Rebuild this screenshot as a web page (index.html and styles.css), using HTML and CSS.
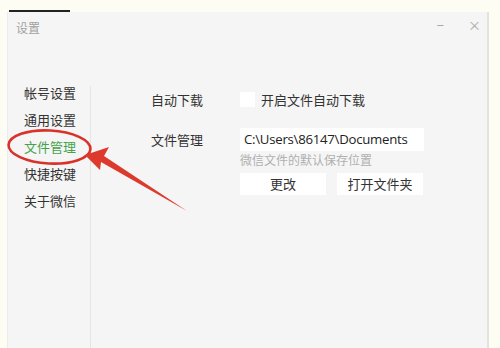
FILE: index.html
```html
<!DOCTYPE html>
<html lang="zh-CN">
<head>
<meta charset="utf-8">
<title>设置</title>
<link rel="stylesheet" href="styles.css">
</head>
<body>
<div class="topbar"></div>
<div class="window">
  <div class="titlebar">
    <span class="title">设置</span>
    <div class="winctl"><span class="min">−</span><span class="close">×</span></div>
  </div>
  <div class="main">
    <ul class="sidebar">
      <li>帐号设置</li>
      <li>通用设置</li>
      <li class="active">文件管理</li>
      <li>快捷按键</li>
      <li>关于微信</li>
    </ul>
    <div class="content">
      <div class="label row1">自动下载</div>
      <div class="ctl row1"><span class="checkbox"></span><span class="cbtext">开启文件自动下载</span></div>
      <div class="label row2">文件管理</div>
      <div class="ctl">
        <div class="input">C:\Users\86147\Documents</div>
        <div class="hint">微信文件的默认保存位置</div>
        <div class="btns"><span class="btn">更改</span><span class="btn">打开文件夹</span></div>
      </div>
    </div>
  </div>
</div>
<svg class="annot" width="500" height="348" viewBox="0 0 500 348">
  <ellipse cx="49.5" cy="147" rx="41" ry="16.5" fill="none" stroke="#d8322b" stroke-width="2.6" transform="rotate(3 49.5 147)"/>
  <polygon points="85,155 109,147 104,156 187,211 101,162 100,170" fill="#dd3a2e"/>
</svg>
</body>
</html>
```
FILE: styles.css
```css
html, body {
  margin: 0;
  padding: 0;
}
body {
  width: 500px;
  height: 348px;
  overflow: hidden;
  background: #fdfdf4;
  font-family: "Noto Sans CJK SC", "Noto Sans", sans-serif;
  position: relative;
}
.topbar {
  margin: 10px 0 0 9px;
  width: 61px;
  height: 2px;
  background: #222;
}
.window {
  margin-left: 7px;
  width: 482px;
  height: 336px;
  background: #f5f5f5;
  border-right: 2px solid #e2e2e2;
  border-left: 1px solid #ececec;
  box-sizing: border-box;
  display: flex;
  flex-direction: column;
}
.titlebar {
  height: 74px;
  display: flex;
  justify-content: space-between;
  align-items: flex-start;
  padding: 7px 0 0 8px;
  box-sizing: border-box;
}
.title {
  font-size: 12px;
  color: #a2a2a2;
  line-height: 17px;
}
.winctl {
  display: flex;
  gap: 24px;
  padding-right: 6px;
  margin-top: -4px;
  color: #a8a8a8;
  font-size: 13px;
  line-height: 20px;
}
.main {
  flex: 1;
  display: flex;
}
.sidebar {
  list-style: none;
  margin: 0;
  padding: 0;
  width: 82px;
  border-right: 1px solid #e4e4e4;
}
.sidebar li {
  padding-left: 16px;
  font-size: 13px;
  line-height: 27px;
  color: #333;
}
.sidebar li:first-child {
  margin-top: -7px;
}
.sidebar li.active {
  color: #45a34a;
}
.content {
  padding: 6px 0 0 60px;
  display: grid;
  grid-template-columns: 89px 184px;
  grid-auto-rows: min-content;
  row-gap: 21px;
  align-content: start;
}
.label {
  font-size: 13px;
  color: #333;
  line-height: 15px;
}
.label.row2 {
  line-height: 23px;
}
.ctl.row1 {
  display: flex;
  align-items: center;
  height: 15px;
}
.checkbox {
  width: 15px;
  height: 15px;
  background: #fff;
  flex: none;
}
.cbtext {
  margin-left: 6px;
  font-size: 13px;
  color: #333;
}
.input {
  height: 23px;
  background: #fff;
  font-family: "Open Sans", "Noto Sans", sans-serif;
  font-size: 13.2px;
  line-height: 23px;
  padding-left: 4px;
  color: #222;
  letter-spacing: -0.25px;
}
.hint {
  font-size: 12px;
  color: #b0b0b0;
  line-height: 18px;
}
.btns {
  display: flex;
  gap: 11px;
  margin-top: 4px;
}
.btn {
  width: 86px;
  height: 22px;
  background: #fff;
  font-size: 13px;
  color: #333;
  text-align: center;
  line-height: 22px;
}
.annot {
  position: absolute;
  left: 0;
  top: 0;
  pointer-events: none;
}
```
